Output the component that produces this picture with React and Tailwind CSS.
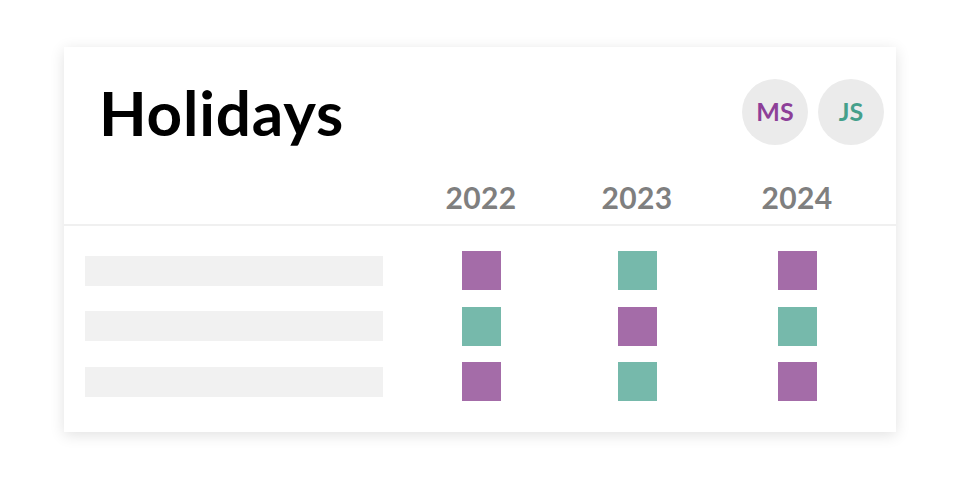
import React from "react";

// ─── Holidays card ────────────────────────────────────────────────────────────
const PURPLE = "bg-[#a46ca8]";
const TEAL = "bg-[#76b9ab]";

const rows = [
  [PURPLE, TEAL, PURPLE],
  [TEAL, PURPLE, TEAL],
  [PURPLE, TEAL, PURPLE],
];

const years = ["2022", "2023", "2024"];
const colWidths = ["w-[156px]", "w-[156px]", "w-[164px]"];

export default function App() {
  return (
    <div className="w-[960px] h-[480px] bg-white overflow-hidden" style={{ fontFamily: "Lato, 'Noto Sans', sans-serif" }}>
      <div className="ml-[64px] mt-[47px] w-[832px] h-[385px] bg-white shadow-[0_3px_14px_rgba(0,0,0,0.12)]">

        {/* Header: title + avatars */}
        <div className="flex justify-between items-start pt-[32px] pl-[35px] pr-[12px]">
          <h1 className="mt-[2px] text-[62px] leading-none font-bold tracking-[0.8px] text-black">Holidays</h1>
          <div className="flex gap-[10px]">
            <div className="w-[66px] h-[66px] rounded-full bg-[#ebebeb] flex items-center justify-center text-[25px] font-bold text-[#8d3f98]">
              MS
            </div>
            <div className="w-[66px] h-[66px] rounded-full bg-[#ebebeb] flex items-center justify-center text-[25px] font-bold text-[#45a08b]">
              JS
            </div>
          </div>
        </div>

        {/* Year headings */}
        <div className="flex mt-[37px] pl-[21px]">
          <div className="w-[298px]" />
          <div className="flex ml-[20px]">
            {years.map((y, i) => (
              <div key={y} className={`${colWidths[i]} text-center text-[30px] leading-none font-bold tracking-[0.3px] text-[#7f7f7f]`}>
                {y}
              </div>
            ))}
          </div>
        </div>

        <div className="mt-[12px] h-[2px] bg-[#f0f0f0]" />

        {/* Rows */}
        <div className="mt-[25px] pl-[21px] flex flex-col gap-[16.5px]">
          {rows.map((cells, r) => (
            <div key={r} className="flex items-center h-[39px]">
              <div className="w-[298px] h-[30px] bg-[#f1f1f1]" />
              <div className="flex ml-[20px]">
                {cells.map((c, i) => (
                  <div key={i} className={`${colWidths[i]} flex justify-center`}>
                    <div className={`w-[39px] h-[39px] ${c}`} />
                  </div>
                ))}
              </div>
            </div>
          ))}
        </div>
      </div>
    </div>
  );
}
